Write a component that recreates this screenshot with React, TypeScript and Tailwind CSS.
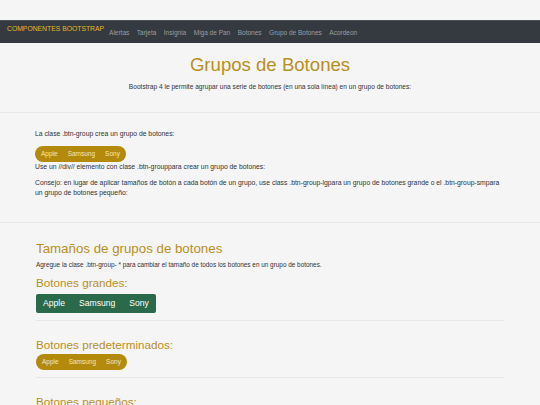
const links = ["Alertas", "Tarjeta", "Insignia", "Miga de Pan", "Botones", "Grupo de Botones", "Acordeon"];
const brands = ["Apple", "Samsung", "Sony"];

function PillGroup() {
    return (
        <div className="flex w-fit h-[16px] items-center rounded-full bg-[#b38a0c] px-[6px] gap-[10px] text-[6.5px] text-[#f4e6bf]">
            {brands.map((b) => (
                <span key={b}>{b}</span>
            ))}
        </div>
    );
}

export default function App() {
    return (
        <div className="min-h-[405px] bg-[#f5f5f5] pt-[20px] font-['Liberation_Sans',Arial,sans-serif] text-[#333]">
            {/* Navbar */}
            <nav className="flex h-[23px] items-start gap-[5px] border-t border-[#4b5157] bg-[#343a40] px-[7px] pt-[3px]">
                <span className="text-[6.8px] leading-[9px] text-[#e8b923]">COMPONENTES BOOTSTRAP</span>
                <div className="flex gap-[7.5px] pt-[4px]">
                    {links.map((l) => (
                        <span key={l} className="text-[6.5px] leading-[9px] text-[#9a9ea3]">{l}</span>
                    ))}
                </div>
            </nav>

            {/* Header */}
            <div className="border-b border-[#e6e6e6] pt-[11px] pb-[21px] text-center">
                <h1 className="text-[18.6px] leading-[22px] text-[#b8901e]">Grupos de Botones</h1>
                <p className="mt-[6px] text-[6.6px] leading-[9px]">
                    Bootstrap 4 le permite agrupar una serie de botones (en una sola línea) en un grupo de botones:
                </p>
            </div>

            {/* Intro */}
            <div className="border-b border-[#e6e6e6] px-[35px] pt-[16px] pb-[24px] text-[6.8px] leading-[10px]">
                <p>La clase .btn-group crea un grupo de botones:</p>
                <div className="mt-[7px]">
                    <PillGroup />
                </div>
                <p>Use un //div// elemento con clase .btn-grouppara crear un grupo de botones:</p>
                <p className="mt-[6px]">
                    Consejo: en lugar de aplicar tamaños de botón a cada botón de un grupo, use class .btn-group-lgpara un grupo de botones grande o el .btn-group-smpara un grupo de botones pequeño:
                </p>
            </div>

            {/* Sizes */}
            <div className="mx-[36px] pt-[18px]">
                <h2 className="text-[13.3px] leading-[16px] text-[#b8901e]">Tamaños de grupos de botones</h2>
                <p className="mt-[3px] text-[6.4px] leading-[9px]">
                    Agregue la clase .btn-group- * para cambiar el tamaño de todos los botones en un grupo de botones.
                </p>
                <h3 className="mt-[7px] text-[11.7px] leading-[14px] text-[#b8901e]">Botones grandes:</h3>
                <div className="mt-[4px] flex w-fit h-[19px] items-center gap-[14px] rounded-[2px] bg-[#2a6a4b] px-[7px] text-[8.6px] text-white">
                    {brands.map((b) => (
                        <span key={b}>{b}</span>
                    ))}
                </div>
                <div className="mt-[7px] border-b border-[#e6e6e6]" />
                <h3 className="mt-[17px] text-[11.7px] leading-[14px] text-[#b8901e]">Botones predeterminados:</h3>
                <div className="mt-[2px]">
                    <PillGroup />
                </div>
                <div className="mt-[7px] border-b border-[#e6e6e6]" />
                <h3 className="mt-[17px] text-[11.7px] leading-[14px] text-[#b8901e]">Botones pequeños:</h3>
            </div>
        </div>
    );
}
